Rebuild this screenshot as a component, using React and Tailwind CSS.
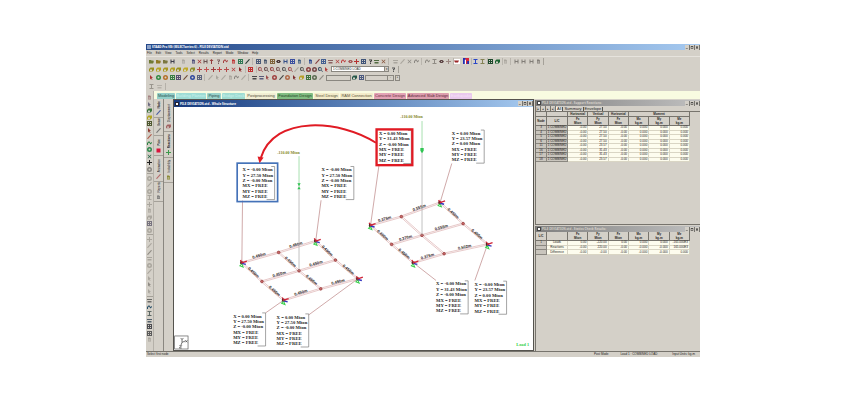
import React, { useState } from "react";

// small 10x10 glyphs used by every toolbar
const glyphs = {
  doc: "M2 1h4l2 2v6H2z M3 4h4v1H3z M3 6h4v1H3z",
  folder: "M0 2h4l1 1h4v2H3L1 9H0z M3 5h7L8 9H1z",
  save: "M1 1h8v8H1z M3 1h4v3H3z M3 6h4v3H3z",
  box: "M0 4l3-3h7v5L7 9H0z M2 5h4v3H2z",
  cross: "M4 0h2v4h4v2H6v4H4V6H0V4h4z",
  x: "M1 2l1-1 3 3 3-3 1 1-3 3 3 3-1 1-3-3-3 3-1-1 3-3z",
  arrow: "M5 0l4 4H6v6H4V4H1z",
  mag: "M4 0a4 4 0 0 1 3 6l3 3-1 1-3-3a4 4 0 1 1-2-7z M4 2a2 2 0 1 0 0 4 2 2 0 0 0 0-4z",
  grid: "M0 0h10v10H0z M2 2h2v2H2z M6 2h2v2H6z M2 6h2v2H2z M6 6h2v2H6z",
  ring: "M5 0a5 5 0 1 1 0 10A5 5 0 0 1 5 0z M5 3a2 2 0 1 0 0 4 2 2 0 0 0 0-4z",
  eye: "M0 5l3-3h4l3 3-3 3H3z M5 4a1 1 0 1 0 0 2 1 1 0 0 0 0-2z",
  beam: "M1 0h8v2H6v6h3v2H1V8h3V2H1z",
  line: "M0 9l8-9 2 1-8 9z",
  wave: "M0 8V4l3-3h2l2 3 3-2v2L7 7 4 3 2 5v3z",
  pointer: "M2 0l6 6H5l2 3-1 1-2-3-2 2z",
  square: "M1 1h8v8H1z",
  help: "M2 1h6v4H6v2H4V4h2V3H2z M4 8h2v2H4z",
  cup: "M0 3h10L8 7H2z",
  bars: "M0 2h10v2H0z M1 6h8v3H1z",
};

const G = "#aaa69e";

const row1 = [
  { w: "w-[26px]", ml: "ml-[3px]", icons: [["folder", "#6f7a35"], ["folder", "#8f7a25"], ["folder", "#7b7740"], ["save", "#3d3d4a"]] },
  { w: "w-[5px]", ml: "ml-[6px]", icons: [["doc", G]] },
  { w: "w-[23px]", ml: "ml-[5px]", icons: [["doc", "#4a4a78"], ["x", "#a93636"], ["save", "#6b5252"], ["arrow", "#943c3c"]] },
  { w: "w-[34px]", ml: "ml-[2px]", icons: [["help", "#7d6060"], ["wave", "#a84343"], ["doc", "#c03030"], ["grid", "#327a55"], ["line", "#2d3d36"]] },
  { w: "w-[46px]", ml: "ml-[6px]", sep: true, icons: [["grid", "#4b5b78"], ["doc", "#43536b"], ["grid", "#80643c"], ["eye", "#473535"], ["save", "#355088"], ["grid", "#3b4fa0"], ["doc", "#3e5c82"]] },
  { w: "w-[78px]", ml: "ml-[6px]", sep: true, icons: [["doc", "#27458e"], ["line", "#863f3f"], ["grid", "#445f91"], ["bars", "#8b6262"], ["x", "#b44747"], ["wave", "#c04545"], ["eye", "#a65656"], ["cross", "#b63030"], ["grid", "#405478"], ["help", "#3d3d3d"], ["bars", "#526b42"], ["x", "#8b5940"]] },
  { w: "w-[26px]", ml: "ml-[7px]", sep: true, icons: [["bars", G], ["line", G], ["x", "#908c86"], ["wave", "#8b8782"]] },
  { w: "w-[26px]", ml: "ml-[6px]", sep: true, icons: [["wave", "#918d86"], ["beam", "#8f8b84"], ["eye", "#5b4242"], ["cross", "#9c8882"]] },
  { w: "w-[6px] bg-white", ml: "ml-[3px]", sep: true, icons: [["cup", "#9a2525"]] },
  { w: "w-[6px]", ml: "ml-[3px]", icons: [["flag", ""]] },
  { w: "w-[12px]", ml: "ml-[4px]", sep: true, icons: [["beam", "#2946c7"], ["beam", "#848255"]] },
  { w: "w-[12px]", ml: "ml-[3px]", sep: true, icons: [["grid", "#1e4a2c"], ["box", "#1c6330"]] },
  { w: "w-[5px]", ml: "ml-[3px]", sep: true, icons: [["doc", G]] },
  { w: "w-[27px]", ml: "ml-[6px]", sep: true, icons: [["save", "#827e78"], ["save", "#827e78"], ["save", "#827e78"], ["doc", "#827e78"]] },
];

const row2 = [
  {
    w: "w-[94px]", ml: "ml-[3px]",
    icons: [["box", "#99901e"], ["box", "#b5a321"], ["box", "#a89720"], ["box", "#b3a023"], ["box", "#99901e"], ["box", "#c0a925"], ["box", "#8e8c2a"], ["cross", "#b34545"], ["cross", "#c35050"], ["cross", "#a03c3c"], ["cross", "#c04444"], ["cross", "#b54b4b"], ["x", "#b53f3f"], ["pointer", "#8c2323"]],
  },
  { w: "w-[6px]", ml: "ml-[5px]", sep: true, icons: [["grid", "#c03030"]] },
  {
    w: "w-[71px]", ml: "ml-[4px]", sep: true,
    icons: [["mag", "#a05656"], ["mag", "#6e5656"], ["mag", "#9b4a4a"], ["mag", "#7f5b5b"], ["mag", "#5b5b5b"], ["mag", "#a05656"], ["line", G], ["mag", "#5b5a56"], ["ring", "#8e4141"], ["ring", "#764848"], ["mag", "#41576b"], ["pointer", "#b03c3c"]],
  },
];

const row3 = [
  { w: "w-[53px]", ml: "ml-[3px]", icons: [["pointer", "#ac3434"], ["ring", "#2f8a43"], ["ring", "#b5702a"], ["grid", "#367f43"], ["grid", "#555070"], ["line", "#6d4c36"], ["ring", "#3048a0"], ["grid", "#5b627c"]] },
  { w: "w-[38px]", ml: "ml-[6px]", sep: true, icons: [["line", G], ["pointer", G], ["line", G], ["doc", G], ["wave", "#8b8782"], ["line", G]] },
  {
    w: "w-[72px]", ml: "ml-[6px]", sep: true,
    icons: [["bars", "#484848"], ["bars", "#5a5a7a"], ["pointer", "#9c4c4c"], ["ring", "#a04343"], ["line", "#444444"], ["ring", "#b06a4a"], ["pointer", "#7f3030"], ["box", "#b89f27"], ["grid", "#41743f"], ["ring", "#5c6c52"], ["line", "#8d8983"]],
  },
];

const sideIcons = [
  ["doc", "#a48282"], ["pointer", "#6d6a80"], ["box", "#39733b"], ["box", "#b0a420"], ["grid", "#4e5830"], ["pointer", "#913c32"], ["line", "#b05a4a"], ["wave", "#2c8144"], ["ring", "#2f8a4f"], ["x", "#2a694a"], ["cross", "#202020"], ["ring", "#8b8782"],
  null,
  ["ring", G], ["line", G], ["ring", G], ["beam", G], ["cross", G], ["doc", G], ["box", G], ["grid", "#77737f"], ["ring", G],
  null,
  ["cross", G], ["line", G], ["line", "#8f8b84"], ["bars", G], ["ring", G], ["line", G], ["pointer", G], ["pointer", "#8f8b84"], ["pointer", G],
  null,
  ["bars", "#6b6b68"], ["wave", "#28506a"], ["beam", "#5d6864"], ["bars", "#53606b"], ["grid", "#4d4d52"], ["grid", "#5b5b5b"], ["doc", G],
];

const menus = ["File", "Edit", "View", "Tools", "Select", "Results", "Report", "Mode", "Window", "Help"];

const modeTabs = [
  ["Modeling", "w-[18px] bg-[#93cfc9] text-[#28504c]"],
  ["Building Planner", "w-[30px] bg-[#9ddcd5] text-[#c9f1ec]"],
  ["Piping", "w-[14px] bg-[#9bd3cb] text-[#28504c]"],
  ["Bridge Deck", "w-[23px] bg-[#9fdcd2] text-[#c9f1ec]"],
  ["Postprocessing", "w-[30px] bg-[#f2efd4] text-[#4c4a3a]"],
  ["Foundation Design", "w-[36px] bg-[#82bd82] text-[#1f4423]"],
  ["Steel Design", "w-[25px] bg-[#f3ecca] text-[#5b5238]"],
  ["RAM Connection", "w-[33px] bg-[#f3ecca] text-[#5b5238]"],
  ["Concrete Design", "w-[32px] bg-[#e3a3b5] text-[#6b2d40]"],
  ["Advanced Slab Design", "w-[42px] bg-[#dc9fae] text-[#5b2737]"],
  ["Earthquake", "w-[22px] bg-[#e9c9ee] text-[#f5e2f8]"],
];

const reactions = [
  [3, "27.50"], [4, "27.50"], [5, "27.50"], [6, "27.50"],
  [11, "23.57"], [16, "31.43"], [17, "31.43"], [18, "23.57"],
];

const statics = [
  ["1", "Loads", "0.00", "-220.00", "0.00", "0.000", "0.000", "-165.000E3"],
  ["", "Reactions", "-0.00", "220.00", "-0.00", "-0.000", "-0.000", "165.000E3"],
  ["", "Difference", "-0.00", "-0.00", "-0.00", "-0.000", "-0.000", "0.000"],
];

// canvas data, three units per pixel at the default window size
const labels = [
  { x: 205, y: 192, right: 301, v: ["-0.00", "27.50", "-0.00"] },
  { x: 441, y: 192, right: 538, v: ["-0.00", "27.50", "-0.00"] },
  { x: 613, y: 84, right: 710, v: ["0.00", "31.43", "-0.00"] },
  { x: 831, y: 83, right: 928, v: ["0.00", "23.57", "0.00"] },
  { x: 177, y: 630, right: 274, v: ["0.00", "27.50", "-0.00"] },
  { x: 307, y: 633, right: 403, v: ["0.00", "27.50", "-0.00"] },
  { x: 784, y: 534, right: 880, v: ["-0.00", "31.43", "-0.00"] },
  { x: 899, y: 535, right: 995, v: ["-0.00", "23.57", "0.00"] },
];

const frames = [
  {
    nodes: [[203, 466], [313, 435], [424, 401], [263, 522], [374, 490], [483, 458], [328, 578], [439, 544], [550, 514]],
    across: ["0.450m", "0.450m", "0.450m", "0.450m", "0.450m", "0.450m"],
  },
  {
    nodes: [[588, 354], [680, 328], [796, 286], [651, 411], [742, 384], [865, 349], [716, 466], [808, 439], [938, 411]],
    across: ["0.375m", "0.555m", "0.370m", "0.555m", "0.375m", "0.502m"],
  },
];
const acrossPairs = [[0, 1], [1, 2], [3, 4], [4, 5], [6, 7], [7, 8]];
const downPairs = [[0, 3], [3, 6], [1, 4], [4, 7], [2, 5], [5, 8]];

const leaders = [
  [205, 280, 203, 466], [440, 279, 424, 401], [274, 616, 328, 578], [403, 622, 550, 514],
  [613, 176, 588, 354], [831, 169, 796, 286], [784, 519, 716, 466], [900, 519, 938, 411],
];

function Glyph({ name, color }) {
  if (name === "flag") {
    return (
      <svg viewBox="0 0 10 10" className="block h-[6px] w-[6px]">
        <path d="M0 0h10v10H0z" fill="#2330b4" />
        <path d="M4 0h6v5H7v5H4z" fill="#d8283a" />
        <path d="M3 3h2v7H3z" fill="#fff" />
      </svg>
    );
  }
  return (
    <svg viewBox="0 0 10 10" className="block h-[5px] w-[5px]" fill={color} fillRule="evenodd">
      <path d={glyphs[name]} />
    </svg>
  );
}

function IconGroup({ group }) {
  return (
    <>
      {group.sep && <span className="-mr-[3px] ml-[2px] h-[7px] w-px shrink-0 bg-[#b9b5ad]" />}
      <div className={`flex shrink-0 items-center justify-between ${group.w} ${group.ml}`}>
        {group.icons.map(([name, color], i) => (
          <button key={i} type="button" aria-label={name}>
            <Glyph name={name} color={color} />
          </button>
        ))}
      </div>
    </>
  );
}

function WindowButtons() {
  return (
    <div className="ml-auto flex shrink-0">
      {["M2 7h5v1H2z", "M2 2h6v6H2z M3 4v3h4V4z", "M2 3l1-1 2 2 2-2 1 1-2 2 2 2-1 1-2-2-2 2-1-1 2-2z"].map((d, i) => (
        <button key={i} type="button" aria-label={["Minimize", "Restore", "Close"][i]} className="h-[5px] w-[5px] border-r border-[#77756f] bg-[#d4d0c8]">
          <svg viewBox="0 0 10 10" className="block h-[5px] w-[4px]" fill="#222" fillRule="evenodd">
            <path d={d} />
          </svg>
        </button>
      ))}
    </div>
  );
}

function Member({ from, to, text, down }) {
  const angle = (Math.atan2(to[1] - from[1], to[0] - from[0]) * 180) / Math.PI;
  const mx = (from[0] + to[0]) / 2;
  const my = (from[1] + to[1]) / 2;
  const len = Math.hypot(to[0] - from[0], to[1] - from[1]);
  return (
    <g transform={`translate(${mx} ${my}) rotate(${angle})`}>
      <rect x={-len / 2} y={-2} width={len} height={4} fill="#fff" stroke="#bd6a6a" strokeWidth={1} />
      {text && (
        <text x={down ? 4 : -2} y={down ? 1 : -3} textAnchor="middle" fontSize={12} fontWeight="bold" fill="#2b2424" className="font-['Liberation_Sans',Arial,sans-serif]">
          {text}
        </text>
      )}
    </g>
  );
}

function Support({ x, y }) {
  return (
    <g strokeWidth={4} fill="none">
      <path d={`M${x - 6} ${y + 9}l6-6 4 10z`} stroke="#3bd04c" strokeWidth={3} />
      <path d={`M${x} ${y + 2}l12 3`} stroke="#3333c0" />
      <path d={`M${x - 4} ${y - 8}l4 10 M${x} ${y}l15-5`} stroke="#d02336" />
      <path d={`M${x - 3} ${y - 4}v8`} stroke="#4a2a2a" strokeWidth={3} />
    </g>
  );
}

function Structure() {
  return (
    <svg viewBox="0 0 1074 726" className="block h-auto w-full bg-white font-['Liberation_Serif','Times_New_Roman',serif]">
      {leaders.map(([x1, y1, x2, y2], i) => (
        <line key={i} x1={x1} y1={y1} x2={x2} y2={y2} stroke="#b98080" strokeWidth={2} />
      ))}
      {frames.map((f, k) => (
        <g key={k}>
          {acrossPairs.map(([a, b], i) => (
            <Member key={i} from={f.nodes[a]} to={f.nodes[b]} text={f.across[i]} />
          ))}
          {downPairs.map(([a, b], i) => (
            <Member key={i} from={f.nodes[a]} to={f.nodes[b]} text={k === 1 && (i === 2 || i === 3) ? "" : "0.450m"} down />
          ))}
          {f.nodes.map(([x, y], i) => (
            <circle key={i} cx={x} cy={y} r={4} fill="#c96a6a" stroke="#8e3232" strokeWidth={2} />
          ))}
          {[0, 2, 6, 8].map((i) => (
            <Support key={i} x={f.nodes[i][0]} y={f.nodes[i][1]} />
          ))}
        </g>
      ))}

      {/* applied loads */}
      <g fontSize={12} fontWeight="bold" fill="#85852a">
        <path d="M374 228V490 M742 129V384" stroke="#a3a3a3" strokeWidth={2} />
        <path d="M374 147V236 M742 42V132" stroke="#7ed08a" strokeWidth={2} />
        <path d="M369 228h10l-5 8z M369 246h10l-5-8z M737 123h10v8l-5 7-5-7z" fill="#2fc552" />
        <text x={309} y={141}>-110.00 Mton</text>
        <text x={677} y={34}>-110.00 Mton</text>
      </g>

      {/* reaction boxes */}
      {labels.map((l, i) => (
        <g key={i} fontSize={14} fontWeight="bold" fill="#1e1e1e">
          <path d={`M${l.right - 10} ${l.y - 14}H${l.right}V${l.y + 85}H${l.right - 24}`} fill="none" stroke="#777" strokeWidth={2} />
          {[`X = ${l.v[0]} Mton`, `Y = ${l.v[1]} Mton`, `Z = ${l.v[2]} Mton`, "MX = FREE", "MY = FREE", "MZ = FREE"].map((t, n) => (
            <text key={n} x={l.x} y={l.y + n * 16}>{t}</text>
          ))}
        </g>
      ))}
      <rect x={189} y={168} width={121} height={115} fill="none" stroke="#4472b8" strokeWidth={5} />
      <rect x={606} y={67} width={107} height={107} fill="none" stroke="#e01b24" strokeWidth={7} />
      <path d="M604 107C500 40 300 20 259 154" fill="none" stroke="#e01b24" strokeWidth={6} />
      <path d="M256 168l-6-20 18 3z" fill="#e01b24" />

      <text x={1024} y={716} fontSize={13} fontWeight="bold" fill="#35d04a">Load 1</text>

      <g fill="none" stroke="#555" strokeWidth={2}>
        <rect x={2} y={685} width={40} height={39} fill="#fff" />
        <path d="M20 691l4 5 4-5 M24 696v8l10-4 M24 704l-3 8 M34 698l6 6 M40 698l-6 6 M16 714h7l-7 7h7" stroke="#333" />
      </g>
    </svg>
  );
}

function Toolbars() {
  return (
    <div className="overflow-hidden bg-[#d4d0c8]">
      <div className="flex h-[9px] items-center border-t border-[#e6e3dd]">
        {row1.map((g, i) => <IconGroup key={i} group={g} />)}
        <span className="ml-[2px] h-[7px] w-px bg-[#a5a199]" />
      </div>
      <div className="flex h-2 items-center">
        {row2.map((g, i) => <IconGroup key={i} group={g} />)}
        <select aria-label="Load case" className="ml-[2px] h-[6px] w-[54px] shrink-0 appearance-none border border-[#8a8780] bg-white pl-px text-[3px] leading-[4px]">
          <option>1:COMBINED LOAD</option>
        </select>
        <span className="flex h-[6px] w-[4px] items-center justify-center border border-l-0 border-[#8a8780] text-[3px] leading-[3px]">▾</span>
        <button type="button" aria-label="Help" className="ml-[2px]"><Glyph name="help" color="#555" /></button>
        <span className="ml-[2px] h-[7px] w-px bg-[#a5a199]" />
      </div>
      <div className="flex h-[9px] items-center">
        {row3.map((g, i) => <IconGroup key={i} group={g} />)}
        <select aria-label="Result type" className="ml-[2px] h-[6px] w-[25px] shrink-0 appearance-none border border-[#8a8780] bg-[#d4d0c8] text-[3px]" />
        <div className="ml-px flex w-[12px] shrink-0 justify-between">
          <Glyph name="box" color="#27594a" />
          <Glyph name="grid" color="#4c5a80" />
        </div>
        <input aria-label="Scale" className="ml-px h-[6px] w-[23px] shrink-0 border border-[#8a8780] bg-[#d4d0c8] text-[3px]" />
        <button type="button" className="h-[6px] w-[6px] border border-l-0 border-[#8a8780] text-[3px] leading-[3px]">-</button>
        <button type="button" className="ml-px h-[6px] w-[5px] border border-[#8a8780] text-[3px] leading-[3px]">+</button>
      </div>
      <div className="flex h-[9px] items-center gap-[3px] pl-[3px]">
        <Glyph name="beam" color="#99958d" />
        <Glyph name="bars" color="#b5b1a9" />
        <span className="h-[7px] w-px bg-[#b5b1a9]" />
      </div>
    </div>
  );
}

function SideTab({ label, height, icon, color, active }) {
  return (
    <button type="button" className={`flex w-full flex-col items-center justify-end gap-[2px] border-b border-[#a5a199] pb-[2px] ${height} ${active ? "font-bold" : ""}`}>
      <span className="rotate-180 text-[3px] leading-[4px] [writing-mode:vertical-rl]">{label}</span>
      <Glyph name={icon} color={color} />
    </button>
  );
}

function PanelTitle({ children }) {
  return (
    <div className="flex h-[6px] items-center bg-linear-to-r from-[#808080] to-[#c0c0c0] pl-px font-['Noto_Sans',sans-serif] text-[3px] leading-[4px] font-bold text-[#d4d0c8]">
      <span className="mr-px h-[4px] w-[4px] border border-[#444] bg-white" />
      <span className="whitespace-nowrap">{children}</span>
      <WindowButtons />
    </div>
  );
}

const th = "border-r border-b border-[#77746d] bg-[#d4d0c8] p-0 text-center text-[3px] leading-[4px] font-bold";
const rowHead = "border-r border-b border-[#8a8780] bg-[#c9c5bd] p-0 text-center";
const td = "border-r border-b border-[#d9d5c4] bg-[#fdfcee] p-0 pr-px text-right";

function Columns() {
  return (
    <colgroup>
      <col className="w-[11px]" />
      <col className="w-[21px]" />
      <col /><col /><col /><col /><col /><col />
    </colgroup>
  );
}

function Results() {
  const [tab, setTab] = useState("All");
  return (
    <div className="flex w-[165px] shrink-0 flex-col pt-px text-[#222]">
      <section className="h-[125px] border-b border-l border-[#77746d]">
        <PanelTitle>PILE DEVIATION.std - Support Reactions:</PanelTitle>
        <div className="flex h-[5px] items-center text-[4px] leading-[4px]">
          {["|◂", "◂", "▸", "▸|"].map((t) => (
            <button key={t} type="button" className="h-[5px] w-[5px] border-r border-[#77746d] text-[3px] leading-[4px]">{t}</button>
          ))}
          {["All", "Summary", "Envelope"].map((t) => (
            <button key={t} type="button" onClick={() => setTab(t)} className={`border-r border-[#55534e] px-px ${t === tab ? "bg-[#f4f2ee]" : ""}`}>
              {t}
            </button>
          ))}
        </div>
        <div className="border-t border-[#77746d] pr-[10px]">
          <table className="h-[50px] w-full table-fixed border-separate border-spacing-0 text-[3px] leading-[3px]">
            <Columns />
            <thead>
              <tr>
                <th className={th} /><th className={th} />
                <th className={th}>Horizontal</th><th className={th}>Vertical</th><th className={th}>Horizontal</th>
                <th className={th} colSpan={3}>Moment</th>
              </tr>
              <tr>
                <th className={th}>Node</th><th className={th}>L/C</th>
                <th className={th}>Fx<br />Mton</th><th className={th}>Fy<br />Mton</th><th className={th}>Fz<br />Mton</th>
                <th className={th}>Mx<br />kg-m</th><th className={th}>My<br />kg-m</th><th className={th}>Mz<br />kg-m</th>
              </tr>
            </thead>
            <tbody>
              {reactions.map(([node, fy]) => (
                <tr key={node}>
                  <td className={rowHead}>{node}</td>
                  <td className={`${rowHead} whitespace-nowrap`}>1 COMBINED</td>
                  <td className={td}>-0.00</td>
                  <td className={td}>{fy}</td>
                  <td className={td}>-0.00</td>
                  <td className={td}>0.000</td>
                  <td className={td}>0.000</td>
                  <td className={td}>0.000</td>
                </tr>
              ))}
            </tbody>
          </table>
        </div>
      </section>
      <section className="mt-px flex-1 border-l border-[#77746d]">
        <PanelTitle>PILE DEVIATION.std - Statics Check Results:</PanelTitle>
        <div className="pr-[10px]">
          <table className="h-[23px] w-full table-fixed border-separate border-spacing-0 text-[3px] leading-[3px]">
            <Columns />
            <thead>
              <tr>
                <th className={th}>L/C</th><th className={th} />
                <th className={th}>Fx<br />Mton</th><th className={th}>Fy<br />Mton</th><th className={th}>Fz<br />Mton</th>
                <th className={th}>Mx<br />kg-m</th><th className={th}>My<br />kg-m</th><th className={th}>Mz<br />kg-m</th>
              </tr>
            </thead>
            <tbody>
              {statics.map((r) => (
                <tr key={r[1]}>
                  <td className={rowHead}>{r[0]}</td>
                  <td className="border-r border-b border-[#d9d5c4] bg-[#fdfcee] p-0 text-center">{r[1]}</td>
                  {r.slice(2).map((v, i) => <td key={i} className={td}>{v}</td>)}
                </tr>
              ))}
            </tbody>
          </table>
        </div>
      </section>
    </div>
  );
}

export default function App() {
  return (
    <div className="bg-white px-[146px] pt-[44px] font-['Liberation_Sans',Arial,sans-serif] text-[#222]">
      <div className="bg-[#d4d0c8]">
        <header className="flex h-[6px] items-center bg-linear-to-r from-[#24488a] to-[#a6caf0] pl-px font-['Noto_Sans',sans-serif] text-[3px] leading-[4px] font-bold text-white">
          <span className="mr-px h-[4px] w-[4px] bg-[#8fa3c8]" />
          <h1 className="whitespace-nowrap">STAAD.Pro V8i (SELECTseries 6) - PILE DEVIATION.std</h1>
          <WindowButtons />
        </header>
        <nav className="flex h-[6px] items-center gap-[4px] pl-px text-[3px] leading-[4px]">
          {menus.map((m) => <button key={m} type="button">{m}</button>)}
        </nav>
        <Toolbars />

        <div className="flex">
          <aside className="flex w-2 shrink-0 flex-col items-center justify-between border-r border-[#b5b1a9] pt-1 pb-2">
            {sideIcons.map((it, i) =>
              it ? (
                <button key={i} type="button" aria-label={it[0]}><Glyph name={it[0]} color={it[1]} /></button>
              ) : (
                <span key={i} className="h-px w-[6px] bg-[#a5a199]" />
              )
            )}
          </aside>

          <div className="min-w-0 flex-1">
            <div className="flex h-2 items-end gap-px bg-[#f8fbe1] pl-[3px]">
              {modeTabs.map(([label, style]) => (
                <button key={label} type="button" className={`h-[6px] shrink-0 overflow-hidden rounded-t-[1px] text-center text-[4px] leading-[6px] whitespace-nowrap ${style}`}>
                  {label}
                </button>
              ))}
            </div>

            <main className="flex">
              <div className="w-[10px] shrink-0 border-r border-[#8a8780]">
                <SideTab label="Node" height="h-[19px]" icon="line" color="#4b5ea0" active />
                <SideTab label="Beam" height="h-[18px]" icon="line" color="#777" />
                <SideTab label="Plate" height="h-[20px]" icon="square" color="#d8143c" />
                <SideTab label="Animation" height="h-[26px]" icon="line" color="#b56a6a" />
                <SideTab label="Reports" height="h-[20px]" icon="doc" color="#6b6b6b" />
              </div>
              <div className="w-[9px] shrink-0 pt-[5px]">
                <SideTab label="Displacement" height="h-[28px]" icon="box" color="#a06060" />
                <SideTab label="Reactions" height="h-[26px]" icon="cross" color="#3d9a4b" active />
                <SideTab label="Instability" height="h-[25px]" icon="doc" color="#8b8a35" />
              </div>

              <section className="min-w-0 flex-1 border border-[#55534e]">
                <div className="flex h-[7px] items-center bg-linear-to-r from-[#163a7e] to-[#a6caf0] pl-px font-['Noto_Sans',sans-serif] text-[3px] leading-[4px] font-bold text-white">
                  <span className="mr-px h-[4px] w-[4px] border border-[#223] bg-white" />
                  <h2 className="whitespace-nowrap">PILE DEVIATION.std - Whole Structure</h2>
                  <WindowButtons />
                </div>
                <Structure />
              </section>
              <span className="w-px shrink-0" />
              <Results />
            </main>
          </div>
        </div>

        <footer className="flex h-[6px] items-center border-t border-[#77746d] px-px text-[3px] leading-[4px] whitespace-nowrap">
          <span>Select first node</span>
          <span className="mr-[12px] ml-auto">Post Mode</span>
          <span className="mr-[15px]">Load 1 : COMBINED LOAD</span>
          <span className="pr-[4px]">Input Units: kg-m</span>
        </footer>
      </div>
    </div>
  );
}
